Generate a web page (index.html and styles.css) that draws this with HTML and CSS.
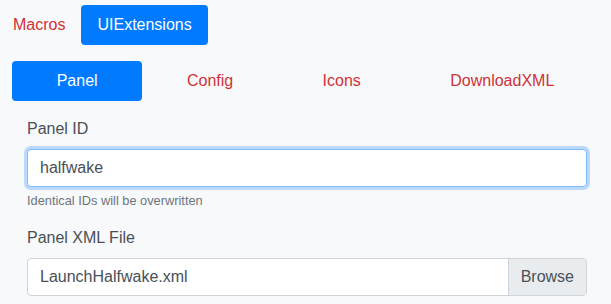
FILE: index.html
```html
<!DOCTYPE html>
<html>

<head>
    <title>UI Extensions</title>
    <link rel="stylesheet" href="styles.css">
</head>

<body>
    <div class="page">
        <!-- top level tabs -->
        <ul class="pills top">
            <li><a class="pill" href="#">Macros</a></li>
            <li><a class="pill active" href="#">UIExtensions</a></li>
        </ul>

        <!-- sub tabs -->
        <ul class="pills fill">
            <li><a class="pill active" href="#">Panel</a></li>
            <li><a class="pill" href="#">Config</a></li>
            <li><a class="pill" href="#">Icons</a></li>
            <li><a class="pill" href="#">DownloadXML</a></li>
        </ul>

        <div class="panel">
            <div class="group">
                <label for="txtPanelId">Panel ID</label>
                <input type="text" id="txtPanelId" class="field focused" value="halfwake" />
                <small class="help">Identical IDs will be overwritten</small>
            </div>
            <div class="group">
                <label>Panel XML File</label>
                <div class="file">
                    <span class="file-name">LaunchHalfwake.xml</span>
                    <span class="file-btn">Browse</span>
                </div>
            </div>
        </div>
    </div>
</body>

</html>
```

FILE: styles.css
```css
/* UI extensions panel */

body {
    margin: 0;
    background-color: #f8f9fa;
    font-family: "Liberation Sans", Arial, sans-serif;
    font-size: 16px;
    line-height: 1.5;
    color: #495057;
}

.page {
    padding: 5px 12px 0 12px;
}

.pills {
    display: flex;
    list-style: none;
    margin: 0 0 16px 0;
    padding: 0;
}

.top {
    margin-left: -15px;
}

.fill li {
    flex: 1 1 auto;
    text-align: center;
}

.pill {
    display: block;
    padding: 8px 16px;
    color: #cf3237;
    text-decoration: none;
    border-radius: 4px;
}

.pill.active {
    background-color: #007bff;
    color: #fff;
}

.panel {
    padding: 0 12px 0 15px;
}

.group {
    margin-bottom: 16px;
}

label {
    display: block;
    margin-bottom: 8px;
    color: #495057;
}

.field {
    display: block;
    box-sizing: border-box;
    width: 100%;
    height: 38px;
    padding: 6px 12px;
    font-family: inherit;
    font-size: 16px;
    color: #495057;
    background-color: #fff;
    border: 1px solid #ced4da;
    border-radius: 4px;
    outline: none;
}

.field.focused {
    border-color: #80bdff;
    box-shadow: 0 0 0 3px rgba(0, 123, 255, 0.25);
}

.help {
    display: block;
    margin-top: 4px;
    font-size: 12.8px;
    color: #6c757d;
}

.file {
    display: flex;
    height: 38px;
    box-sizing: border-box;
    border: 1px solid #ced4da;
    border-radius: 4px;
    background-color: #fff;
    overflow: hidden;
}

.file-name {
    flex: 1;
    padding: 6px 12px;
}

.file-btn {
    padding: 6px 12px;
    background-color: #e9ecef;
    border-left: 1px solid #ced4da;
}
```
